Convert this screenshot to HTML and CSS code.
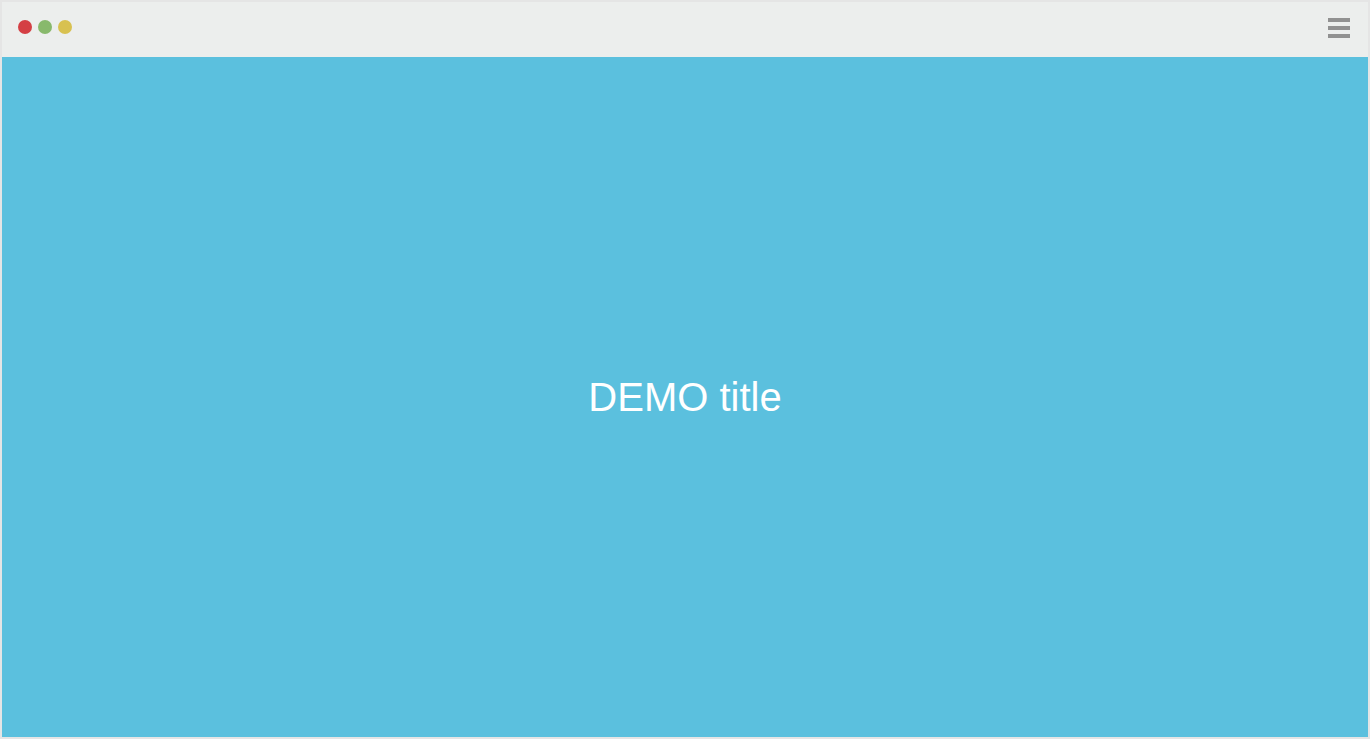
FILE: index.html
```html
<!DOCTYPE html>
<html>
<head>
<meta charset="utf-8">
<link rel="stylesheet" href="styles.css">
</head>
<body>
<div class="window">
  <div class="topbar">
    <div class="dots">
      <span class="dot red"></span>
      <span class="dot green"></span>
      <span class="dot yellow"></span>
    </div>
    <div class="menu">
      <span class="bar"></span>
      <span class="bar"></span>
      <span class="bar"></span>
    </div>
  </div>
  <div class="content">
    <h1 class="title">DEMO title</h1>
  </div>
</div>
</body>
</html>
```

FILE: styles.css
```css
html, body {
  margin: 0;
  padding: 0;
  height: 100%;
}
body {
  font-family: "Liberation Sans", Arial, sans-serif;
}
.window {
  box-sizing: border-box;
  height: 739px;
  border: 2px solid #e5e5e5;
  display: flex;
  flex-direction: column;
}
.topbar {
  height: 55px;
  background: #eceeed;
  display: flex;
  align-items: flex-start;
  justify-content: space-between;
  padding: 16px 18px 0 16px;
  box-sizing: border-box;
}
.dots {
  display: flex;
  gap: 6px;
  align-items: center;
  margin-top: 2px;
}
.dot {
  width: 14px;
  height: 14px;
  border-radius: 50%;
  display: block;
}
.red { background: #d43f44; }
.green { background: #88b96c; }
.yellow { background: #d8c150; }
.menu {
  display: flex;
  flex-direction: column;
  gap: 4px;
  width: 22px;
}
.bar {
  display: block;
  height: 4px;
  background: #919191;
}
.content {
  flex: 1;
  background: #5bc0de;
  display: flex;
  align-items: center;
  justify-content: center;
}
.title {
  margin: 0;
  color: #fff;
  font-weight: normal;
  font-size: 40px;
  line-height: 1;
}
```
